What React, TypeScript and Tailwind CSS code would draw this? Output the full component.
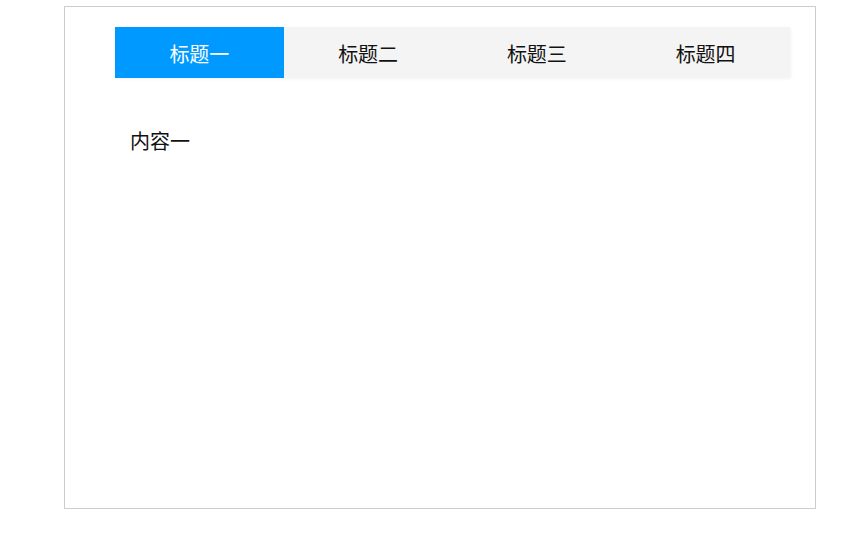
import React, { useState } from "react";

const tabs = ["标题一", "标题二", "标题三", "标题四"];
const contents = ["内容一", "内容二", "内容三", "内容四"];

export default function App() {
  const [active, setActive] = useState(0);
  return (
    <div
      className="w-[862px] h-[543px] bg-white"
      style={{ fontFamily: '"Noto Sans CJK SC", "Noto Sans", sans-serif' }}
    >
      <div className="ml-[64px] mt-[6px] w-[752px] h-[503px] border border-[#cccccc] bg-white">
        <div className="ml-[50px] mt-[20px] w-[675px] h-[51px] flex bg-[#f4f4f4] shadow-[1px_1px_3px_rgba(0,0,0,0.05)]">
          {tabs.map((t, i) => (
            <div
              key={t}
              onClick={() => setActive(i)}
              className={
                "flex-1 flex items-center justify-center pt-[3px] text-[20px] leading-[20px] cursor-pointer " +
                (i === active ? "bg-[#0099ff] text-white" : "text-[#111111]")
              }
            >
              {t}
            </div>
          ))}
        </div>
        <div className="ml-[65px] mt-[53px] text-[20px] leading-[20px] text-[#111111]">
          {contents[active]}
        </div>
      </div>
    </div>
  );
}
